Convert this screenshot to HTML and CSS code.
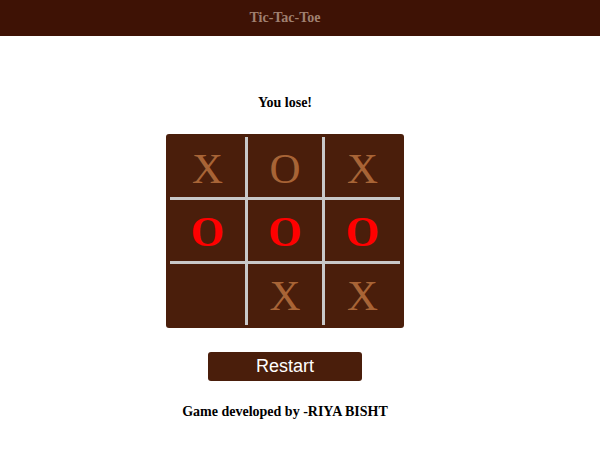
FILE: index.html
```html
<!DOCTYPE html>
<html>
<head>
<meta charset="utf-8">
<link rel="stylesheet" href="styles.css">
</head>
<body>
<header class="topbar"><h1 class="title">Tic-Tac-Toe</h1></header>
<main class="main">
  <p class="status">You lose!</p>
  <div class="board">
    <div class="cell c-x">X</div>
    <div class="cell mid-col c-x">O</div>
    <div class="cell c-x">X</div>
    <div class="cell mid-row c-win">O</div>
    <div class="cell mid-row mid-col c-win">O</div>
    <div class="cell mid-row c-win">O</div>
    <div class="cell"></div>
    <div class="cell mid-col c-x">X</div>
    <div class="cell c-x">X</div>
  </div>
  <button class="restart">Restart</button>
  <p class="credit">Game developed by -RIYA BISHT</p>
</main>
</body>
</html>
```
FILE: styles.css
```css
html, body { margin: 0; padding: 0; background: #fff; }
body { font-family: "Liberation Serif", "Times New Roman", serif; }
.topbar {
  height: 36px;
  background: #3e1205;
  display: flex;
  align-items: center;
  justify-content: center;
  padding-right: 30px;
}
.title {
  margin: 0;
  font-size: 14px;
  font-weight: bold;
  color: #a08070;
}
.main {
  width: 570px;
  display: flex;
  flex-direction: column;
  align-items: center;
}
.status {
  margin: 59px 0 0;
  font-size: 14px;
  font-weight: bold;
  line-height: 15px;
  color: #000;
}
.board {
  margin-top: 24px;
  width: 238px;
  height: 194px;
  box-sizing: border-box;
  padding: 3px 4px;
  background: #4a1e0b;
  border-radius: 3px;
  display: grid;
  grid-template-columns: 75px 80px 75px;
  grid-template-rows: 60px 67px 61px;
}
.cell {
  display: flex;
  align-items: center;
  justify-content: center;
  font-size: 43px;
  line-height: 1;
  padding-top: 2px;
  box-sizing: border-box;
}
.mid-col { border-left: 3px solid #c8c8c8; border-right: 3px solid #c8c8c8; }
.mid-row { border-top: 3px solid #c8c8c8; border-bottom: 3px solid #c8c8c8; }
.c-x { color: #a86436; }
.c-win { color: #ff0000; font-weight: bold; }
.restart {
  margin-top: 24px;
  width: 154px;
  height: 29px;
  border: none;
  border-radius: 3px;
  background: #4a1e0b;
  color: #fff;
  font-family: "Liberation Sans", Arial, sans-serif;
  font-size: 18px;
  padding: 0;
}
.credit {
  margin: 23px 0 0;
  font-size: 14px;
  font-weight: bold;
  line-height: 15px;
  color: #000;
}
```
